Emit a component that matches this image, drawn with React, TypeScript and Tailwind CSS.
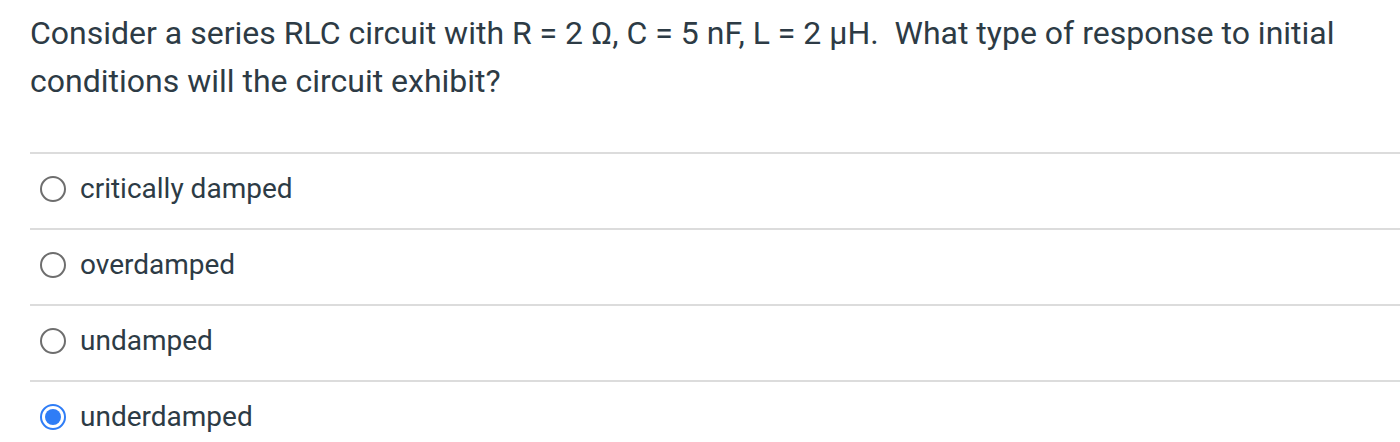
import React from "react";

const options = [
  { label: "critically damped", checked: false },
  { label: "overdamped", checked: false },
  { label: "undamped", checked: false },
  { label: "underdamped", checked: true },
];

function Radio({ checked }: { checked: boolean }) {
  if (checked) {
    return (
      <span className="flex h-[26px] w-[26px] items-center justify-center rounded-full border-[2px] border-[#2f7df6]">
        <span className="h-[16px] w-[16px] rounded-full bg-[#2f7df6]" />
      </span>
    );
  }
  return <span className="h-[26px] w-[26px] rounded-full border-[2px] border-[#6e6e6e]" />;
}

export default function App() {
  return (
    <div className="bg-white pl-[30px] pt-[9px] text-[#2d3b45]" style={{ fontFamily: "Roboto, 'Noto Sans', sans-serif" }}>
      <p className="pr-[40px] text-[32px] leading-[48px]">
        Consider a series RLC circuit with R = 2 Ω, C = 5 nF, L = 2 μH.&nbsp; What type of response to initial
        conditions will the circuit exhibit?
      </p>
      <div className="mt-[47px]">
        {options.map((o) => (
          <div key={o.label} className="flex h-[76px] items-center gap-[14px] border-t-2 border-[#dcdcdc] pb-1 pl-[10px]">
            <Radio checked={o.checked} />
            <span className="text-[28px]">{o.label}</span>
          </div>
        ))}
      </div>
    </div>
  );
}
